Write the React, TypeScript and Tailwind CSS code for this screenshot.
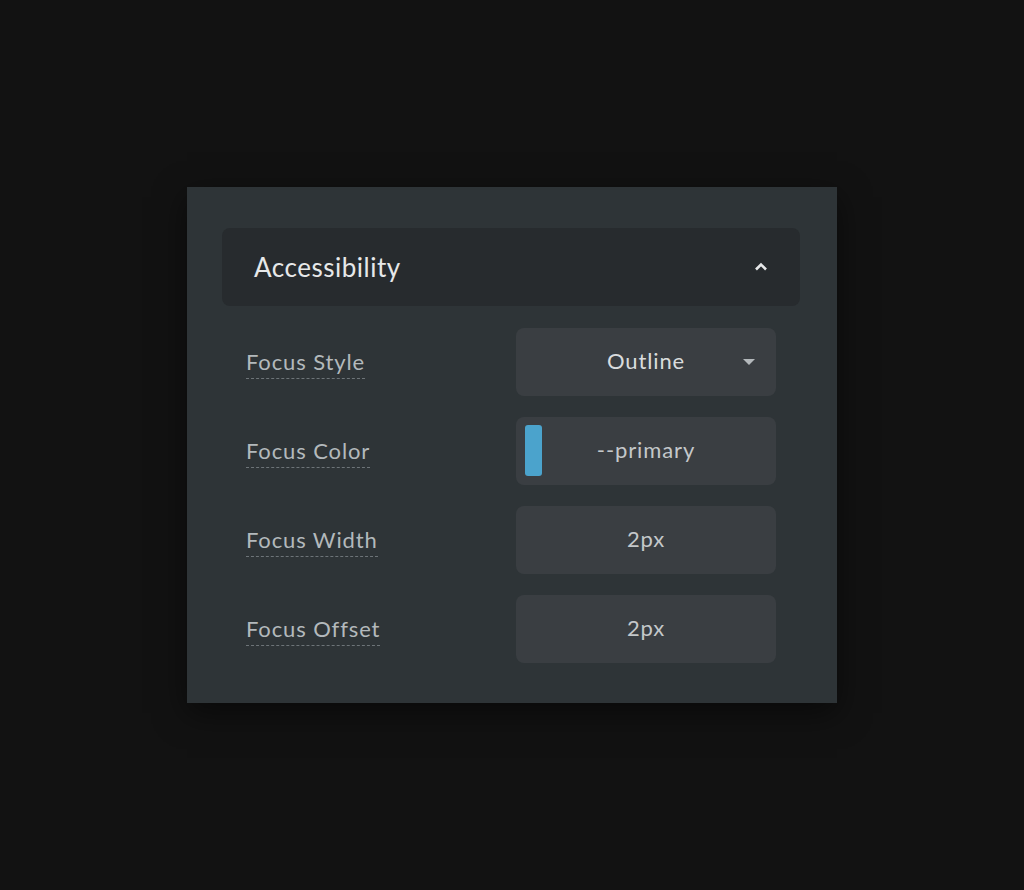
import type { FC, ReactNode } from 'react';

const font = { fontFamily: 'Lato, "Open Sans", sans-serif' };

const Label: FC<{ children: ReactNode }> = ({ children }) => (
	<span className="mt-[4px] text-[22px] leading-[26px] tracking-[0.04em] text-[#b3b9bc] border-b border-dashed border-[#6d7478] pb-[3px]">
		{children}
	</span>
);

const Box: FC<{ children: ReactNode }> = ({ children }) => (
	<div className="relative flex h-[68px] w-[260px] items-center justify-center rounded-lg bg-[#3a3e42] pb-[3px] text-[22px] tracking-[0.04em] text-[#d9dcdd]">
		{children}
	</div>
);

const Row: FC<{ label: string; children: ReactNode }> = ({ label, children }) => (
	<div className="flex items-center justify-between">
		<Label>{label}</Label>
		{children}
	</div>
);

export default function App() {
	return (
		<div className="flex min-h-[890px] w-full justify-center bg-[#121212] pt-[187px]" style={font}>
			<div className="h-[516px] w-[650px] bg-[#2e3437] pl-[35px] pr-[37px] pt-[41px] shadow-[0_10px_30px_rgba(0,0,0,0.5)]">
				<div className="flex h-[78px] items-center justify-between rounded-lg bg-[#272b2e] pl-8 pr-8">
					<span className="text-[26px] tracking-[0.02em] text-[#e6e8e9]">Accessibility</span>
					<svg width="14" height="10" viewBox="0 0 14 10" className="text-[#e6e8e9]">
						<path d="M2 7.5 L7 2.5 L12 7.5" fill="none" stroke="currentColor" strokeWidth="2.6" />
					</svg>
				</div>
				<div className="mt-[22px] flex flex-col gap-[21px] pl-6 pr-6">
					<Row label="Focus Style">
						<Box>
							<span>Outline</span>
							<svg width="12" height="7" viewBox="0 0 12 7" className="absolute right-[21px] top-[31px]">
								<path d="M0 0 H12 L6 6 Z" fill="#b3b8bb" />
							</svg>
						</Box>
					</Row>
					<Row label="Focus Color">
						<Box>
							<span className="absolute left-[9px] top-[8px] h-[51px] w-[17px] rounded-[3px] bg-[#4ba3cc]" />
							<span className="text-[#c4c8ca]">--primary</span>
						</Box>
					</Row>
					<Row label="Focus Width">
						<Box>
							<span className="text-[#c4c8ca]">2px</span>
						</Box>
					</Row>
					<Row label="Focus Offset">
						<Box>
							<span className="text-[#c4c8ca]">2px</span>
						</Box>
					</Row>
				</div>
			</div>
		</div>
	);
}
